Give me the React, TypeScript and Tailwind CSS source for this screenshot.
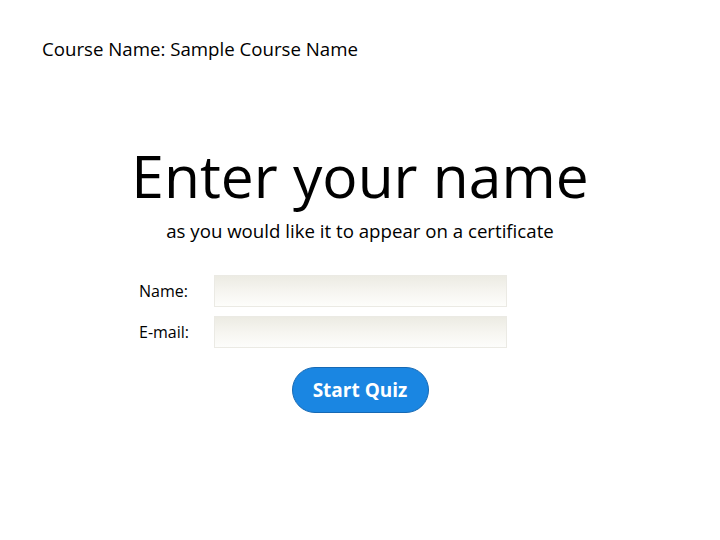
import React, { useState } from "react";

const App = () => {
  const [name, setName] = useState<string>("");
  const [email, setEmail] = useState<string>("");

  return (
    <div
      className="w-[720px] h-[540px] bg-white text-black"
      style={{ fontFamily: '"Open Sans", sans-serif' }}
    >
      <div className="pt-[37px] pl-[42px] text-[18.67px] leading-[24px]">
        Course Name: Sample Course Name
      </div>

      <div className="flex flex-col items-center pt-[79px]">
        <h1 className="text-[58.67px] leading-[70px]">Enter your name</h1>
        <p className="text-[18.67px] leading-[26px] mt-[8px]">
          as you would like it to appear on a certificate
        </p>
      </div>

      <div className="flex flex-col gap-[9px] pl-[139px] mt-[31px]">
        <div className="flex items-center">
          <label className="w-[75px] text-[16px]">Name:</label>
          <input
            type="text"
            value={name}
            onChange={(e) => setName(e.target.value)}
            className="w-[293px] h-[32px] border border-[#ebeae4] bg-gradient-to-b from-[#ecebe3] via-[#f6f5f0] to-[#fdfdfb] px-2 focus:outline-none"
          />
        </div>
        <div className="flex items-center">
          <label className="w-[75px] text-[16px]">E-mail:</label>
          <input
            type="text"
            value={email}
            onChange={(e) => setEmail(e.target.value)}
            className="w-[293px] h-[32px] border border-[#ebeae4] bg-gradient-to-b from-[#ecebe3] via-[#f6f5f0] to-[#fdfdfb] px-2 focus:outline-none"
          />
        </div>
      </div>

      <div className="flex justify-center mt-[19px]">
        <button className="w-[137px] h-[46px] rounded-full bg-[#1a86e2] border border-[#1669b4] text-white font-bold text-[19px]">
          Start Quiz
        </button>
      </div>
    </div>
  );
};

export default App;
